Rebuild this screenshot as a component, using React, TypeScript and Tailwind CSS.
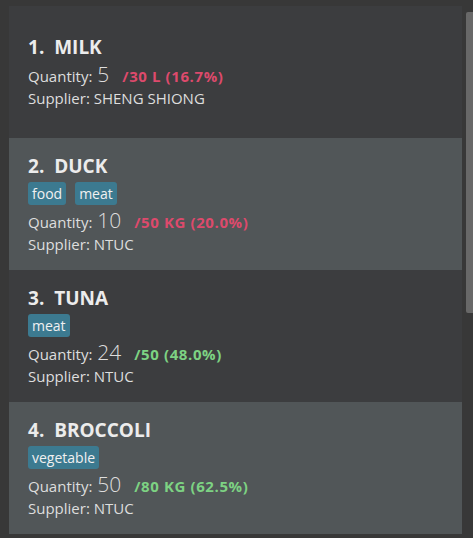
type Item = {
  name: string;
  tags: string[];
  quantity: number;
  max: string;
  low: boolean;
  supplier: string;
};

const items: Item[] = [
  { name: "MILK", tags: [], quantity: 5, max: "/30 L (16.7%)", low: true, supplier: "SHENG SHIONG" },
  { name: "DUCK", tags: ["food", "meat"], quantity: 10, max: "/50 KG (20.0%)", low: true, supplier: "NTUC" },
  { name: "TUNA", tags: ["meat"], quantity: 24, max: "/50 (48.0%)", low: false, supplier: "NTUC" },
  { name: "BROCCOLI", tags: ["vegetable"], quantity: 50, max: "/80 KG (62.5%)", low: false, supplier: "NTUC" },
];

const ItemCard: React.FC<{ item: Item; index: number }> = ({ item, index }) => {
  const even = index % 2 === 1;
  return (
    <div
      className={
        "h-[132px] flex flex-col justify-center pl-[19px] " +
        (even ? "bg-[#515658]" : "bg-[#3c3d3f]")
      }
    >
      <div className="text-[19px] font-bold leading-[24px] text-[#ececec] whitespace-pre">
        {index + 1}.  {item.name}
      </div>
      {item.tags.length > 0 && (
        <div className="flex gap-[9px] mt-[4px]">
          {item.tags.map((tag) => (
            <span
              key={tag}
              className="h-[23px] px-[4px] rounded-[3px] bg-[#3c7a90] text-[14px] leading-[23px] text-[#f0f0f0]"
            >
              {tag}
            </span>
          ))}
        </div>
      )}
      <div className="flex items-baseline mt-[1px] text-[#dedede]">
        <span className="text-[15px]">Quantity:</span>
        <span className="text-[21px] font-light ml-[5px] leading-[28px]">{item.quantity}</span>
        <span
          className={
            "ml-[13px] text-[15px] font-bold tracking-[0.6px] " +
            (item.low ? "text-[#dd4a6c]" : "text-[#7dd283]")
          }
        >
          {item.max}
        </span>
      </div>
      <div className="text-[15px] leading-[21px] text-[#dedede]">Supplier: {item.supplier}</div>
    </div>
  );
};

export default function App() {
  return (
    <div
      className="w-[473px] h-[538px] bg-[#383838] flex pt-[6px] pl-[9px]"
      style={{ fontFamily: '"Open Sans", "Noto Sans", sans-serif' }}
    >
      <div className="w-[453px] flex flex-col">
        {items.map((item, i) => (
          <ItemCard key={item.name} item={item} index={i} />
        ))}
      </div>
      <div className="ml-[4px] w-[7px] pt-[6px]">
        <div className="h-[301px] bg-[#686868] rounded-tl-[2px] rounded-bl-[2px]" />
      </div>
    </div>
  );
}
